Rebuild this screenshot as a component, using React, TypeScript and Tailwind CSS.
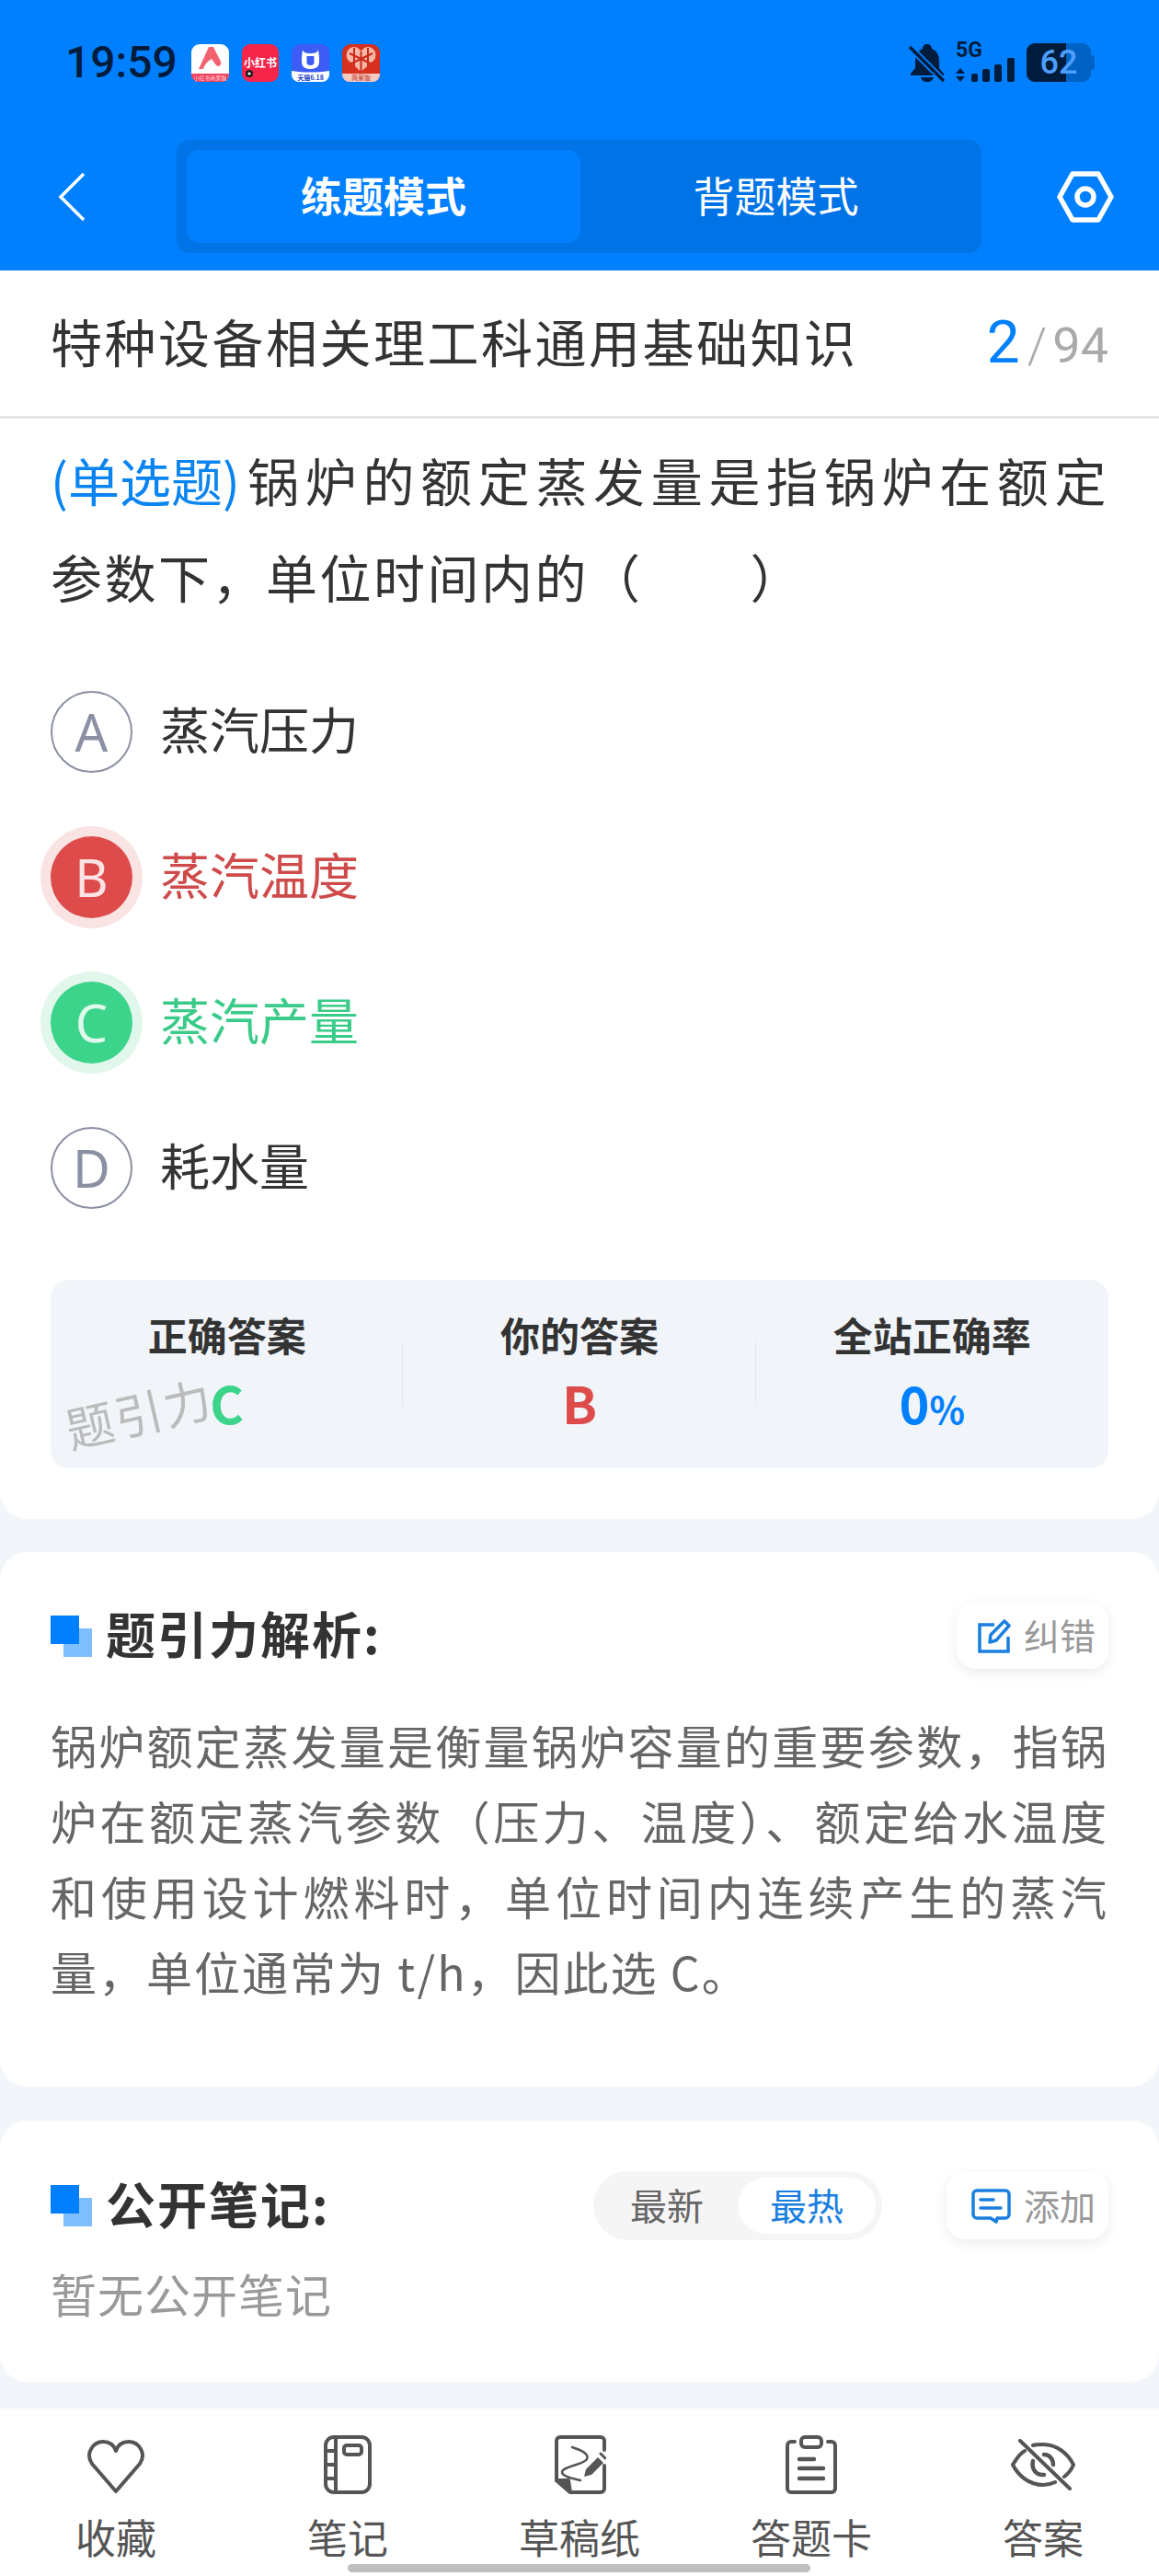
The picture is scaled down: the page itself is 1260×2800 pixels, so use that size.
import React from 'react';

const FONT = '"Noto Sans CJK SC", "Noto Sans", sans-serif';

const AppIcons = () => (
  <div className="flex items-center gap-[14px] ml-[15px]">
    {/* 小红书商家版 */}
    <svg width="41" height="41" viewBox="0 0 41 41">
      <rect width="41" height="41" rx="9" fill="#fff" />
      <path d="M0 32 H41 V33 a8 8 0 0 1 -8 8 H8 a8 8 0 0 1 -8 -8 Z" fill="#f0435f" />
      <path d="M8 27 L19 3 H24 L31 17 C34 21 31 26 27 23 L22 16 C18 18 14 23 13 27 Z" fill="#f4616f" />
      <text x="20.5" y="39" fontSize="6" fill="#ffd5da" textAnchor="middle" fontFamily={FONT}>小红书商家版</text>
    </svg>
    {/* 小红书 */}
    <svg width="40" height="41" viewBox="0 0 40 41">
      <rect width="40" height="41" rx="9" fill="#f8254a" />
      <text x="20" y="25" fontSize="12" fontWeight="700" fill="#fff" textAnchor="middle" fontFamily={FONT}>小红书</text>
      <circle cx="8" cy="32" r="4" fill="#1a1a1a" />
      <circle cx="8" cy="32" r="1.6" fill="#fff" />
    </svg>
    {/* 天猫 */}
    <svg width="41" height="41" viewBox="0 0 41 41">
      <rect width="41" height="41" rx="9" fill="#3d5cf5" />
      <path d="M0 29 C14 31 27 31 41 29 V33 a8 8 0 0 1 -8 8 H8 a8 8 0 0 1 -8 -8 Z" fill="#fff" />
      <path d="M12 6 C13 9 15 10 20.5 10 C26 10 28 9 29 6 L30 14 V19 C30 25 26 27 20.5 27 C15 27 11 25 11 19 V14 Z M16.500 13 V20 C16.500 22 18 23 20.500 23 C23 23 24.500 22 24.500 20 V13 Z" fill="#fff" fillRule="evenodd" />
      <text x="20.5" y="38.500" fontSize="7" fontWeight="700" fill="#2440c8" textAnchor="middle" fontFamily={FONT}>天猫6.18</text>
    </svg>
    {/* 拼多多商家版 */}
    <svg width="41" height="41" viewBox="0 0 41 41">
      <rect width="41" height="41" rx="9" fill="#d8301f" />
      <path d="M0 32 H41 V33 a8 8 0 0 1 -8 8 H8 a8 8 0 0 1 -8 -8 Z" fill="#f6c9bf" />
      <path d="M20.500 30 L6 17 C2 10 7 3 13 3 C16 3 19 5 20.500 8 C22 5 25 3 28 3 C34 3 39 10 35 17 Z" fill="#f7b6a6" />
      <path d="M20.500 8 V30 M8 10 L33 22 M33 10 L8 22 M13 4 V24 M28 4 V24" stroke="#c92a1a" strokeWidth="2" fill="none" />
      <text x="20.5" y="39" fontSize="7" fill="#b52a1a" textAnchor="middle" fontFamily={FONT}>商家版</text>
    </svg>
  </div>
);

const StatusIcons = () => (
  <div className="flex items-center ml-auto mr-[70px]">
    <svg width="40" height="42" viewBox="0 0 40 42">
      <path d="M20 1 C23 1 25 3 25 6 C31 8 33 14 33 20 V27 L38 33 V35 H2 V33 L7 27 V20 C7 14 9 8 15 6 C15 3 17 1 20 1 Z" fill="#001c3d" />
      <path d="M13 37 H27 C26 41 23 42 20 42 C17 42 14 41 13 37 Z" fill="#001c3d" />
      <path d="M1 4 L38 41" stroke="#0080ff" strokeWidth="7" />
      <path d="M1 4 L38 41" stroke="#001c3d" strokeWidth="3.500" />
    </svg>
    <div className="relative ml-[11px] w-[65px] h-[42px]">
      <span className="absolute left-0 top-[-3px] text-[23px] leading-[22px] font-bold text-[#001c3d] font-['Roboto']">5G</span>
      <svg width="65" height="42" viewBox="0 0 65 42" className="absolute left-0 top-0">
        <path d="M5 27 L10 33 H0 Z M5 42 L0 36 H10 Z" fill="#001c3d" />
        <rect x="17" y="33" width="7" height="9" rx="2" fill="#001c3d" />
        <rect x="29" y="28" width="8" height="14" rx="2" fill="#001c3d" />
        <rect x="42" y="23" width="8" height="19" rx="2" fill="#001c3d" />
        <rect x="56" y="16" width="8" height="26" rx="2" fill="#001c3d" />
      </svg>
    </div>
    {/* battery 62% */}
    <div className="relative ml-[12px] w-[70px] h-[42px] rounded-[9px] overflow-hidden bg-[#0062c4] flex items-center justify-center">
      <div className="absolute left-0 top-0 h-full w-[43px] bg-[#001c3d]" />
      <span className="relative text-[36px] leading-none font-medium text-[#4d9fff] font-['Roboto']">62</span>
    </div>
    <div className="w-[4px] h-[16px] bg-[#0062c4] rounded-r-[3px]" />
  </div>
);

const NavBar = () => (
  <div className="flex items-center h-[123px] mt-[16px]">
    <svg width="30" height="54" viewBox="0 0 30 54" className="ml-[63px]">
      <path d="M28 2 L3 27 L28 52" fill="none" stroke="#fff" strokeWidth="3.500" />
    </svg>
    <div className="ml-[99px] w-[875px] h-[123px] rounded-[14px] bg-[#0073e6] p-[11px] flex">
      <div className="w-[428px] rounded-[14px] bg-[#0080ff] flex items-center justify-center pb-[4px] text-white text-[45px] font-bold">
        练题模式
      </div>
      <div className="flex-1 flex items-center justify-center pb-[4px] text-white text-[45px]">背题模式</div>
    </div>
    <svg width="62" height="56" viewBox="0 0 62 56" className="ml-[82px]">
      <path d="M17 3 H45 L59 28 L45 53 H17 L3 28 Z" fill="none" stroke="#fff" strokeWidth="5.500" strokeLinejoin="round" />
      <circle cx="31" cy="28" r="9" fill="none" stroke="#fff" strokeWidth="5.500" />
    </svg>
  </div>
);

const Option = ({ letter, text, state }: { letter: string; text: string; state?: 'wrong' | 'right' }) => {
  const circle =
    state === 'wrong'
      ? 'bg-[#dd4b4b] text-[#fde3e3] ring-[11px] ring-[#f9e3e3]'
      : state === 'right'
        ? 'bg-[#3bd48a] text-[#e0f9ec] ring-[11px] ring-[#e1f7ec]'
        : 'border-[2.5px] border-[#8b90a3] text-[#8b90a3]';
  const label = state === 'wrong' ? 'text-[#cf4a4a]' : state === 'right' ? 'text-[#3bcb88]' : 'text-[#333333]';
  return (
    <div className="flex items-center h-[158px]">
      <div className={`w-[89px] h-[89px] rounded-full flex items-center justify-center text-[56px] leading-none font-normal font-['Noto_Sans'] ${circle}`}>{letter}</div>
      <div className={`ml-[30px] pb-[6px] text-[54px] leading-none ${label}`}>{text}</div>
    </div>
  );
};

const Stat = ({ title, children, divider }: { title: string; children: React.ReactNode; divider?: boolean }) => (
  <div className="relative flex-1 flex flex-col items-center">
    <div className="mt-[35px] text-[43px] leading-[48px] font-bold text-[#333333]">{title}</div>
    <div className="mt-[20px] h-[60px] flex items-baseline font-bold text-[56px] leading-[60px]">{children}</div>
    {divider && <div className="absolute right-0 top-[67px] h-[71px] w-[1px] bg-[#e4e8ec]" />}
  </div>
);

const SectionTitle = ({ text }: { text: string }) => (
  <div className="flex items-center">
    <div className="relative w-[45px] h-[45px]">
      <div className="absolute right-0 bottom-0 w-[31px] h-[31px] bg-[#80bfff]" />
      <div className="absolute left-0 top-0 w-[31px] h-[31px] bg-[#0080ff]" />
    </div>
    <div className="ml-[15px] pb-[6px] text-[54px] leading-none font-bold text-[#333333] tracking-[2px]">{text}</div>
  </div>
);

const SmallButton = ({ icon, label, className }: { icon: React.ReactNode; label: string; className: string }) => (
  <div className={`h-[72px] rounded-[20px] bg-white shadow-[0_4px_14px_rgba(0,0,0,0.08)] flex items-center justify-end pr-[14px] gap-[14px] text-[39px] text-[#999999] ${className}`}>
    {icon}
    <span className="pb-[3px]">{label}</span>
  </div>
);

const NavItem = ({ icon, label }: { icon: React.ReactNode; label: string }) => (
  <div className="flex-1 flex flex-col items-center">
    <div className="h-[64px] flex items-center justify-center">{icon}</div>
    <div className="mt-[23px] text-[44px] leading-[46px] text-[#555555]">{label}</div>
  </div>
);

const S = { fill: 'none', stroke: '#555555', strokeWidth: 4, strokeLinecap: 'round', strokeLinejoin: 'round' } as const;

export default function App() {
  return (
    <div className="relative w-[1260px] h-[2800px] overflow-hidden bg-[#f2f6fa]" style={{ fontFamily: FONT }}>
      {/* Blue header */}
      <div className="h-[294px] bg-[#0080ff]">
        <div className="flex items-center h-[136px] pl-[71px]">
          <span className="text-[48px] leading-none font-medium text-[#001c3d] font-['Roboto']">19:59</span>
          <AppIcons />
          <StatusIcons />
        </div>
        <NavBar />
      </div>

      {/* Question card */}
      <div className="bg-white rounded-b-[30px] pb-[55px]">
        <div className="h-[161px] border-b-[3px] border-[#e5e5e5] flex items-center justify-between px-[55px]">
          <div className="pb-[6px] text-[56px] leading-none tracking-[2.5px] text-[#333333]">特种设备相关理工科通用基础知识</div>
          <div className="flex items-baseline leading-none text-[#aaaaaa] text-[54px] font-['Roboto']">
            <span className="text-[64px] text-[#0080ff] mr-[8px]">2</span>
            <span className="font-light mr-[6px]">/</span>
            <span>94</span>
          </div>
        </div>
        <div className="px-[55px] pt-[13px]">
          <div className="text-[56px] leading-[105px] tracking-[2.5px] text-[#333333] whitespace-nowrap">
            <div className="text-justify [text-align-last:justify] [text-justify:inter-character]">
              <span className="inline-block text-[#0a84f0] tracking-[0px] mr-[4px]">(单选题)</span>锅炉的额定蒸发量是指锅炉在额定
            </div>
            <div>参数下，单位时间内的（　　）</div>
          </div>
          <div className="mt-[38px]">
            <Option letter="A" text="蒸汽压力" />
            <Option letter="B" text="蒸汽温度" state="wrong" />
            <Option letter="C" text="蒸汽产量" state="right" />
            <Option letter="D" text="耗水量" />
          </div>
          <div className="relative mt-[43px] h-[205px] rounded-[20px] bg-[#f1f5f9] flex">
            <Stat title="正确答案" divider>
              <span className="text-[#3bd48a]">C</span>
            </Stat>
            <Stat title="你的答案" divider>
              <span className="text-[#dd4b4b]">B</span>
            </Stat>
            <Stat title="全站正确率">
              <span className="text-[#0080ff]">0</span>
              <span className="text-[#0080ff] text-[40px] font-bold">%</span>
            </Stat>
            <div className="absolute left-[15px] top-[118px] text-[52px] leading-none text-[#bbbbbb] -rotate-[13deg] tracking-[2px]">题引力</div>
          </div>
        </div>
      </div>

      {/* Analysis card */}
      <div className="mt-[36px] h-[581px] bg-white rounded-[30px] px-[55px] pt-[55px]">
        <div className="flex items-center justify-between">
          <SectionTitle text="题引力解析:" />
          <SmallButton
            className="w-[165px]"
            label="纠错"
            icon={
              <svg width="36" height="38" viewBox="0 0 36 38" fill="none" stroke="#1a7fe0" strokeWidth="3.500">
                <path d="M18 7 H2 V36 H33 V20" />
                <path d="M13 26 L14 18 L29 3 L34 8 L20 24 Z" strokeLinejoin="round" />
              </svg>
            }
          />
        </div>
        <div className="mt-[41px] text-[50px] leading-[82px] tracking-[2px] text-[#666666] text-justify">
          锅炉额定蒸发量是衡量锅炉容量的重要参数，指锅炉在额定蒸汽参数（压力、温度）、额定给水温度和使用设计燃料时，单位时间内连续产生的蒸汽量，单位通常为 t/h，因此选 C。
        </div>
      </div>

      {/* Public notes card */}
      <div className="mt-[37px] h-[284px] bg-white rounded-[30px] px-[55px] pt-[55px]">
        <div className="flex items-center h-[75px]">
          <SectionTitle text="公开笔记:" />
          <div className="ml-auto w-[314px] h-[75px] rounded-full bg-[#f5f5f5] p-[7px] pl-0 flex items-center text-[40px]">
            <div className="w-[157px] pl-[3px] pb-[3px] text-center text-[#666666]">最新</div>
            <div className="w-[150px] h-[61px] pb-[3px] rounded-full bg-white flex items-center justify-center text-[#1a7fe0]">最热</div>
          </div>
          <SmallButton
            className="ml-[70px] w-[176px] h-[73px]"
            label="添加"
            icon={
              <svg width="43" height="38" viewBox="0 0 43 38" fill="none" stroke="#1a7fe0" strokeWidth="3.500" strokeLinecap="round">
                <path d="M6 2 H37 a4 4 0 0 1 4 4 V28 a4 4 0 0 1 -4 4 H28 L27 36 L21 32 H6 a4 4 0 0 1 -4 -4 V6 a4 4 0 0 1 4 -4 Z" strokeLinejoin="round" />
                <path d="M10 12 H24 M10 21 H32" />
              </svg>
            }
          />
        </div>
        <div className="mt-[20px] text-[50px] leading-[75px] text-[#999999] tracking-[1px]">暂无公开笔记</div>
      </div>

      {/* Bottom bar */}
      <div className="absolute left-0 right-0 bottom-0 h-[182px] bg-white pt-[29px] flex">
        <NavItem
          label="收藏"
          icon={
            <svg width="66" height="60" viewBox="0 0 66 60" {...S} className="mt-[3px]">
              <path d="M33 57 L7 27 C-1 15 9 3 19 3 C26 3 31 7 33 13 C35 7 40 3 47 3 C57 3 67 15 59 27 Z" />
            </svg>
          }
        />
        <NavItem
          label="笔记"
          icon={
            <svg width="52" height="64" viewBox="0 0 52 64" {...S}>
              <rect x="2" y="2" width="48" height="60" rx="9" />
              <path d="M13 2 V62 M2 17 H13 M2 32 H13 M2 47 H13" />
              <rect x="22" y="11" width="19" height="10" rx="3" />
            </svg>
          }
        />
        <NavItem
          label="草稿纸"
          icon={
            <svg width="56" height="64" viewBox="0 0 56 64" {...S} className="ml-[2px]">
              <path d="M2 48 V6 a4 4 0 0 1 4 -4 H50 a4 4 0 0 1 4 4 V16 M54 33 V58 a4 4 0 0 1 -4 4 H17 L2 49" />
              <path d="M2 49 L15 49 L17 62 Z" fill="#555555" />
              <path d="M19 13 C28 16 38 20 35 26 C32 32 8 34 8 40 C8 45 20 47 28 49" strokeWidth="2.500" />
              <path d="M32 45 L34 37 L47 24 L53 30 L40 43 Z" fill="#555555" stroke="none" />
              <path d="M50 20 L55 25" strokeWidth="3" />
            </svg>
          }
        />
        <NavItem
          label="答题卡"
          icon={
            <svg width="56" height="64" viewBox="0 0 56 64" {...S}>
              <path d="M10 7 H6 a4 4 0 0 0 -4 4 V58 a4 4 0 0 0 4 4 H50 a4 4 0 0 0 4 -4 V11 a4 4 0 0 0 -4 -4 H46" />
              <rect x="17" y="2" width="22" height="11" rx="4" />
              <path d="M15 26 H31 M15 36 H41 M15 47 H41" strokeWidth="4.500" />
            </svg>
          }
        />
        <NavItem
          label="答案"
          icon={
            <svg width="70" height="56" viewBox="0 0 70 56" {...S}>
              <path d="M15 13 C8 17 5 24 2 28 C8 40 20 50 35 50 C40 50 44 49 48 47 M24 7 C27 6 31 6 35 6 C50 6 62 16 68 28 C66 33 62 38 58 41" />
              <path d="M10 2 L64 54" />
              <path d="M24 24 C22 32 27 40 36 39 M36 17 C42 17 46 22 46 28" strokeWidth="4.500" />
            </svg>
          }
        />
      </div>
      <div className="absolute left-[378px] bottom-[4px] w-[503px] h-[9px] rounded-full bg-[#bfbfbf]" />
    </div>
  );
}
